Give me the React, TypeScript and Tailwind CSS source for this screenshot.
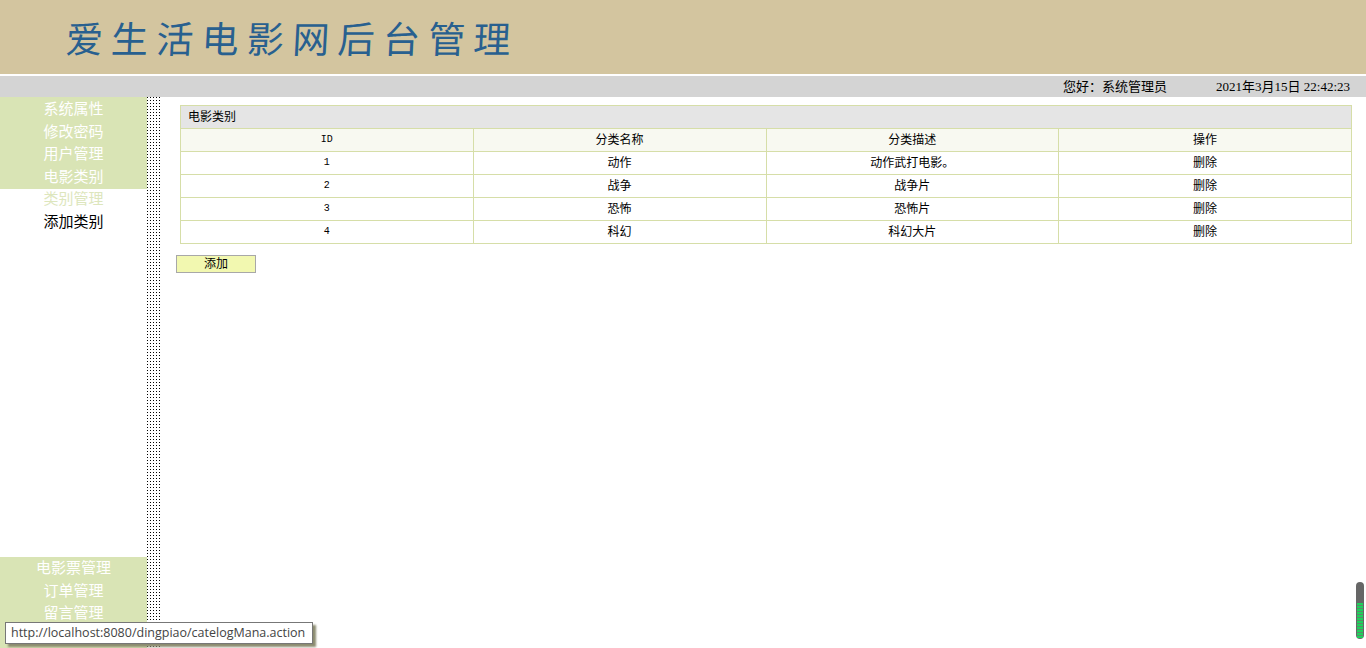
import React from "react";

const cjk = "font-['Liberation_Serif','Noto_Sans_CJK_SC',serif]";

const topMenu = ["系统属性", "修改密码", "用户管理", "电影类别"];
const bottomMenu = ["电影票管理", "订单管理", "留言管理"];

const rows = [
  { id: 1, name: "动作", desc: "动作武打电影。" },
  { id: 2, name: "战争", desc: "战争片" },
  { id: 3, name: "恐怖", desc: "恐怖片" },
  { id: 4, name: "科幻", desc: "科幻大片" },
];

const cell = "border border-[#d6dea8] text-center font-normal p-0";

const App: React.FC = () => {
  return (
    <div className={`h-screen overflow-hidden bg-white text-black flex flex-col ${cjk}`}>
      {/* Banner */}
      <div className="h-[74px] bg-[#d3c59f] shrink-0 pl-[66px] flex items-center">
        <span className="text-[37px] leading-[40px] tracking-[8.3px] text-[#28608f] font-['Noto_Sans_CJK_SC',serif] font-normal -skew-x-3 whitespace-nowrap">
          爱生活电影网后台管理
        </span>
      </div>

      {/* Info bar */}
      <div className="mt-[2px] h-[21px] pt-[1px] bg-[#d4d4d4] shrink-0 flex items-center justify-end pr-[16px] text-[13px]">
        <span>您好：系统管理员</span>
        <span className="ml-[49px]">2021年3月15日 22:42:23</span>
      </div>

      <div className="flex flex-1 min-h-0">
        {/* Side menu */}
        <div className="w-[147px] shrink-0 flex flex-col text-[15px] leading-[22.7px] text-center">
          <div className="bg-[#d9e4b5] text-white h-[92px] pt-[1px]">
            {topMenu.map((m) => (
              <div key={m}>{m}</div>
            ))}
          </div>
          <div className="text-[#dde6bd] -mt-[1px]">类别管理</div>
          <div>添加类别</div>
          <div className="mt-auto bg-[#d9e4b5] text-white h-[91px]">
            {bottomMenu.map((m) => (
              <div key={m}>{m}</div>
            ))}
          </div>
        </div>

        {/* Dotted divider */}
        <div className="w-[13px] shrink-0 bg-black bg-[linear-gradient(to_right,transparent_1px,#fff_1px),linear-gradient(to_bottom,transparent_1px,#fff_1px)] bg-[length:3px_3px]" />

        {/* Content */}
        <div className="flex-1 min-w-0 pt-[8px] pl-[16px] pr-[14px]">
          <div className="pl-[4px]">
            <table className="w-full table-fixed border-collapse text-[12px] leading-[22px]">
              <thead>
                <tr>
                  <th colSpan={4} className="border border-[#d6dea8] bg-[#e5e5e5] text-left font-normal pl-[7px]">
                    电影类别
                  </th>
                </tr>
                <tr className="bg-[#f8f9f1]">
                  <th className={`${cell} font-['Liberation_Mono',monospace] text-[10px]`}>ID</th>
                  <th className={cell}>分类名称</th>
                  <th className={cell}>分类描述</th>
                  <th className={cell}>操作</th>
                </tr>
              </thead>
              <tbody>
                {rows.map((r) => (
                  <tr key={r.id}>
                    <td className={`${cell} font-['Liberation_Mono',monospace] text-[10px]`}>{r.id}</td>
                    <td className={cell}>{r.name}</td>
                    <td className={cell}>{r.desc}</td>
                    <td className={cell}>删除</td>
                  </tr>
                ))}
              </tbody>
            </table>
          </div>
          <button className="mt-[11px] block w-[80px] h-[18px] border border-[#a8a8a8] bg-[#f2f8b0] text-[12px] leading-[16px] text-center">
            添加
          </button>
        </div>
      </div>

      {/* Status tooltip */}
      <div className="absolute left-[5px] top-[622px] w-[308px] h-[22px] bg-white border border-[#777] shadow-[3px_3px_2px_#8c8c70] pl-[5px] text-[12.5px] leading-[20px] text-[#444] font-['Open_Sans',sans-serif] whitespace-nowrap">
        http://localhost:8080/dingpiao/catelogMana.action
      </div>

      {/* Gauge widget */}
      <div className="absolute left-[1356px] top-[582px] w-[8px] h-[57px] rounded-[4px] bg-[#666] overflow-hidden flex flex-col justify-end">
        <div className="h-[35px] mx-[1px] mb-[1px] bg-[repeating-linear-gradient(to_bottom,#1fd05c_0,#1fd05c_2px,#5b8a6b_2px,#5b8a6b_3px)]" />
      </div>
    </div>
  );
};

export default App;
